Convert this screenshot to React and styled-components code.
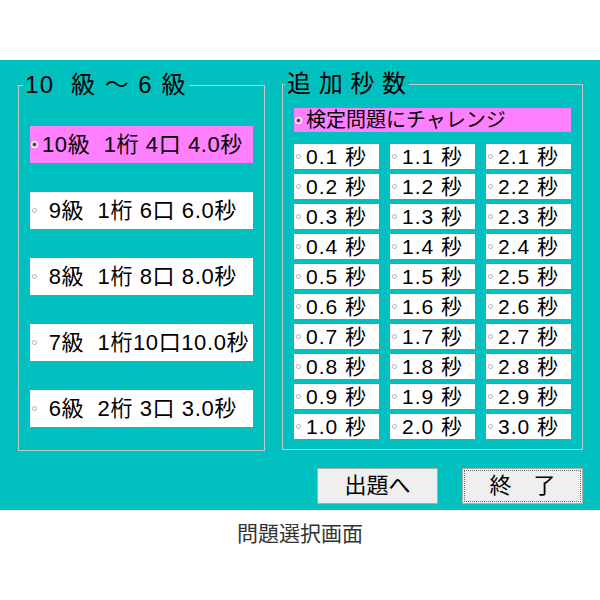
import React, { useState } from 'react';
import styled, { createGlobalStyle } from 'styled-components';

const GlobalStyle = createGlobalStyle`
  body {
    margin: 0;
    background: #fff;
    font-family: "Liberation Sans", "Noto Sans CJK JP", sans-serif;
    color: #000;
  }
`;

const levels = [
  { id: 10, label: '10級  1桁 4口 4.0秒' },
  { id: 9, label: ' 9級  1桁 6口 6.0秒' },
  { id: 8, label: ' 8級  1桁 8口 8.0秒' },
  { id: 7, label: ' 7級  1桁10口10.0秒' },
  { id: 6, label: ' 6級  2桁 3口 3.0秒' },
];

// 0.1 .. 3.0, laid out column by column
const seconds = [];
for (let row = 1; row <= 10; row++) {
  for (let col = 0; col < 3; col++) {
    seconds.push((col + row / 10).toFixed(1));
  }
}

function App() {
  const [level, setLevel] = useState(10);
  const [extra, setExtra] = useState('challenge');

  return (
    <>
      <GlobalStyle />
      <Screen>
        <Panel>
          <Groups>
            <Group $left={4}>
              <Legend $spacing={1.5}>10  級 ～ 6 級</Legend>
              <LevelList>
                {levels.map(l => (
                  <LevelOption key={l.id} $on={level === l.id} onClick={() => setLevel(l.id)}>
                    <Radio $on={level === l.id} />
                    <Label>{l.label}</Label>
                  </LevelOption>
                ))}
              </LevelList>
            </Group>
            <Group $left={2}>
              <Legend $spacing={0.5}>追 加 秒 数</Legend>
              <SecondsBody>
                <ChallengeOption $on={extra === 'challenge'} onClick={() => setExtra('challenge')}>
                  <Radio $on={extra === 'challenge'} />
                  <ChallengeLabel>検定問題にチャレンジ</ChallengeLabel>
                </ChallengeOption>
                <SecondsGrid>
                  {seconds.map(s => (
                    <SecondOption key={s} $on={extra === s} onClick={() => setExtra(s)}>
                      <Radio $on={extra === s} />
                      <SecondLabel>{s} 秒</SecondLabel>
                    </SecondOption>
                  ))}
                </SecondsGrid>
              </SecondsBody>
            </Group>
          </Groups>
          <ButtonBar>
            <Button>出題へ</Button>
            <Button $focused>終　了</Button>
          </ButtonBar>
        </Panel>
        <Caption>問題選択画面</Caption>
      </Screen>
    </>
  );
}

export default App;

const Screen = styled.div`
  width: 600px;
  padding-top: 60px;
`;

const Panel = styled.div`
  height: 450px;
  box-sizing: border-box;
  background: #00c0c0;
  padding: 12px 17px 0 18px;
  display: flex;
  flex-direction: column;
`;

const Groups = styled.div`
  display: flex;
  gap: 17px;
  align-items: flex-start;
`;

const Group = styled.fieldset`
  margin: 0;
  padding: 0;
  min-width: 0;
  border: 1px solid #c8c8c8;
  box-sizing: border-box;
  &:first-child {
    width: 247px;
    margin-top: 1px;
  }
  &:last-child {
    width: 301px;
  }

  legend {
    margin-left: ${props => props.$left}px;
  }
`;

const Legend = styled.legend`
  padding: 0 2px;
  font-size: 24px;
  line-height: 24px;
  letter-spacing: ${props => props.$spacing}px;
  white-space: pre;
`;

const LevelList = styled.div`
  display: flex;
  flex-direction: column;
  gap: 29px;
  padding: 29px 11px 23px 11px;
`;

const LevelOption = styled.div`
  height: 37px;
  display: flex;
  align-items: center;
  padding-left: 2px;
  background: ${props => (props.$on ? '#ff80ff' : '#fff')};
  cursor: default;
`;

const Radio = styled.span`
  flex: none;
  width: 3px;
  height: 3px;
  border-radius: 50%;
  border: 1px solid #b0b0b0;
  background: ${props => (props.$on ? '#404040' : '#fff')};
  box-shadow: ${props => (props.$on ? '0 0 0 1px #fff' : 'none')};
`;

const Label = styled.span`
  margin-left: 5px;
  font-size: 22px;
  line-height: 26px;
  letter-spacing: 0.6px;
  white-space: pre;
`;

const SecondsBody = styled.div`
  padding: 12px 11px 10px 11px;
  display: flex;
  flex-direction: column;
  gap: 12px;
`;

const ChallengeOption = styled.div`
  height: 24px;
  display: flex;
  align-items: center;
  padding-left: 2px;
  background: ${props => (props.$on ? '#ff80ff' : '#fff')};
`;

const ChallengeLabel = styled.span`
  margin-left: 5px;
  font-size: 20px;
  line-height: 24px;
`;

const SecondsGrid = styled.div`
  display: grid;
  grid-template-columns: repeat(3, 85px);
  justify-content: space-between;
  row-gap: 5px;
`;

const SecondOption = styled.div`
  height: 25px;
  display: flex;
  align-items: center;
  padding-left: 2px;
  background: ${props => (props.$on ? '#ff80ff' : '#fff')};
`;

const SecondLabel = styled.span`
  margin-left: 5px;
  font-size: 21px;
  line-height: 25px;
  letter-spacing: 1px;
  white-space: pre;
`;

const ButtonBar = styled.div`
  display: flex;
  justify-content: flex-end;
  gap: 24px;
  margin-top: 17px;
`;

const Button = styled.button`
  width: 121px;
  height: 36px;
  box-sizing: border-box;
  background: #efefef;
  border: 1px solid #adadad;
  font-family: "Liberation Sans", "Noto Sans CJK JP", sans-serif;
  font-size: 22px;
  line-height: 1;
  color: #000;
  padding: 0;
  outline: ${props => (props.$focused ? '1px dotted #707070' : 'none')};
  outline-offset: -3px;
`;

const Caption = styled.div`
  text-align: center;
  margin-top: 8px;
  font-family: "Noto Sans CJK JP", sans-serif;
  font-size: 21px;
  line-height: 28px;
  color: #333;
`;
